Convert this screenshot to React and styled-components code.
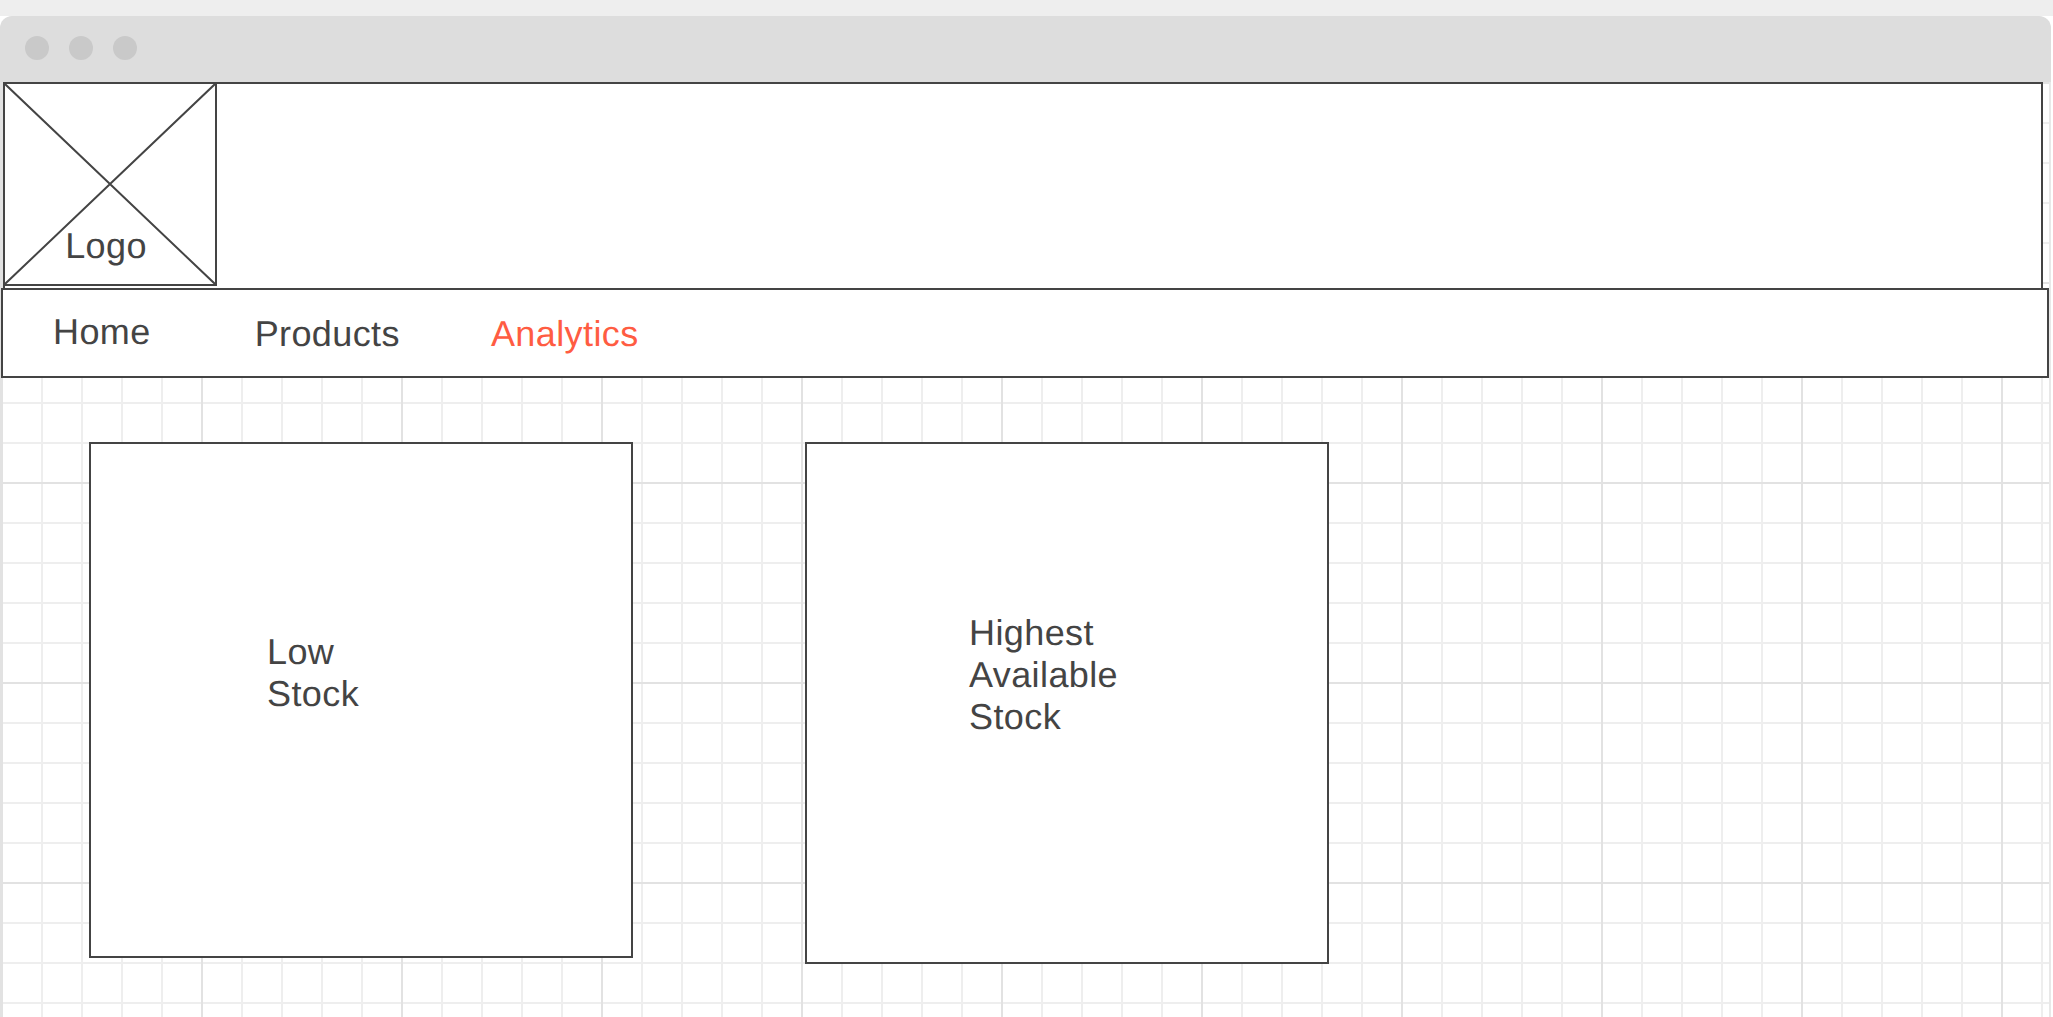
import styled, { createGlobalStyle } from "styled-components";

const GlobalStyle = createGlobalStyle`
  html, body {
    margin: 0;
    background: #fff;
    font-family: "Liberation Sans", Arial, sans-serif;
    text-rendering: geometricPrecision;
  }
`;

const Page = styled.div`
  width: 2053px;
  height: 1017px;
  overflow: hidden;
  background: #fff;
  display: flex;
  flex-direction: column;
`;

const TopStrip = styled.div`
  height: 16px;
  flex: none;
  background: #eeeeee;
`;

const Browser = styled.div`
  width: 2051px;
  flex: 1;
  display: flex;
  flex-direction: column;
  min-height: 0;
`;

const TitleBar = styled.div`
  height: 66px;
  flex: none;
  background: #dddddd;
  border-radius: 12px 12px 0 0;
  display: flex;
  align-items: center;
  gap: 20px;
  padding: 0 25px 2px;
  box-sizing: border-box;
`;

const Dot = styled.span`
  width: 24px;
  height: 24px;
  border-radius: 50%;
  background: #c9c9c9;
`;

const Canvas = styled.div`
  flex: 1;
  min-height: 0;
  border-left: 2px solid #e2e2e2;
  border-right: 2px solid #e8e8e8;
  background-color: #fff;
  background-clip: padding-box;
  background-image:
    repeating-linear-gradient(to right, #e2e2e2 0 2px, transparent 2px 200px),
    repeating-linear-gradient(to bottom, #e2e2e2 0 2px, transparent 2px 200px),
    repeating-linear-gradient(to right, #eeeeee 0 2px, transparent 2px 40px),
    repeating-linear-gradient(to bottom, #eeeeee 0 2px, transparent 2px 40px);
  background-size: 2200px 1200px;
  background-position: -1px 0, 0 0, -1px 0, 0 0;
  display: flex;
  flex-direction: column;
`;

const Header = styled.header`
  height: 208px;
  flex: none;
  margin: 0 6px -2px 1px;
  background: #fff;
  border: 2px solid #444;
  border-bottom: none;
  box-sizing: border-box;
`;

const LogoBox = styled.div`
  position: relative;
  width: 214px;
  height: 202px;
  margin-left: -2px;
  box-sizing: border-box;
  border: 2px solid #444;
  border-top: none;
  padding-right: 8px;
  display: flex;
  justify-content: center;
`;

const Cross = styled.svg`
  position: absolute;
  inset: 0;
  width: 100%;
  height: 100%;
`;

const LogoText = styled.span`
  position: relative;
  margin-top: 142px;
  font-size: 36px;
  line-height: 40px;
  letter-spacing: 0.4px;
  color: #444;
`;

const Nav = styled.nav`
  height: 90px;
  flex: none;
  margin: 0 0 0 -1px;
  background: #fff;
  border: 2px solid #444;
  box-sizing: border-box;
  display: flex;
  position: relative;
`;

const NavItem = styled.a`
  font-size: 36px;
  line-height: 40px;
  letter-spacing: 0.4px;
  color: ${(p) => (p.$active ? "#ff5c42" : "#444")};
  margin-left: ${(p) => p.$left}px;
  margin-top: ${(p) => p.$top}px;
`;

const Cards = styled.main`
  display: flex;
  align-items: flex-start;
  padding: 64px 0 0 87px;
  gap: 172px;
`;

const Card = styled.section`
  width: ${(p) => p.$w}px;
  height: ${(p) => p.$h}px;
  flex: none;
  box-sizing: border-box;
  background: #fff;
  border: 2px solid #444;
  padding: 0 0 ${(p) => p.$lift}px ${(p) => p.$pad}px;
  display: flex;
  align-items: center;
`;

const CardText = styled.p`
  margin: 0;
  font-size: 36px;
  line-height: 42px;
  letter-spacing: 0.4px;
  color: #444;
  white-space: pre-line;
`;

export default function App() {
  return (
    <>
      <GlobalStyle />
      <Page>
        <TopStrip />
        <Browser>
          <TitleBar>
            <Dot />
            <Dot />
            <Dot />
          </TitleBar>
          <Canvas>
            <Header>
              <LogoBox>
                <Cross viewBox="0 0 210 200" preserveAspectRatio="none">
                  <path d="M0 0L210 200M210 0L0 200" stroke="#444" strokeWidth="2" fill="none" />
                </Cross>
                <LogoText>Logo</LogoText>
              </LogoBox>
            </Header>
            <Nav>
              <NavItem $left={50} $top={22}>Home</NavItem>
              <NavItem $left={104} $top={24}>Products</NavItem>
              <NavItem $left={91} $top={24} $active>Analytics</NavItem>
            </Nav>
            <Cards>
              <Card $w={544} $h={516} $pad={176} $lift={54}>
                <CardText>{"Low\nStock"}</CardText>
              </Card>
              <Card $w={524} $h={522} $pad={162} $lift={56}>
                <CardText>{"Highest\nAvailable\nStock"}</CardText>
              </Card>
            </Cards>
          </Canvas>
        </Browser>
      </Page>
    </>
  );
}
